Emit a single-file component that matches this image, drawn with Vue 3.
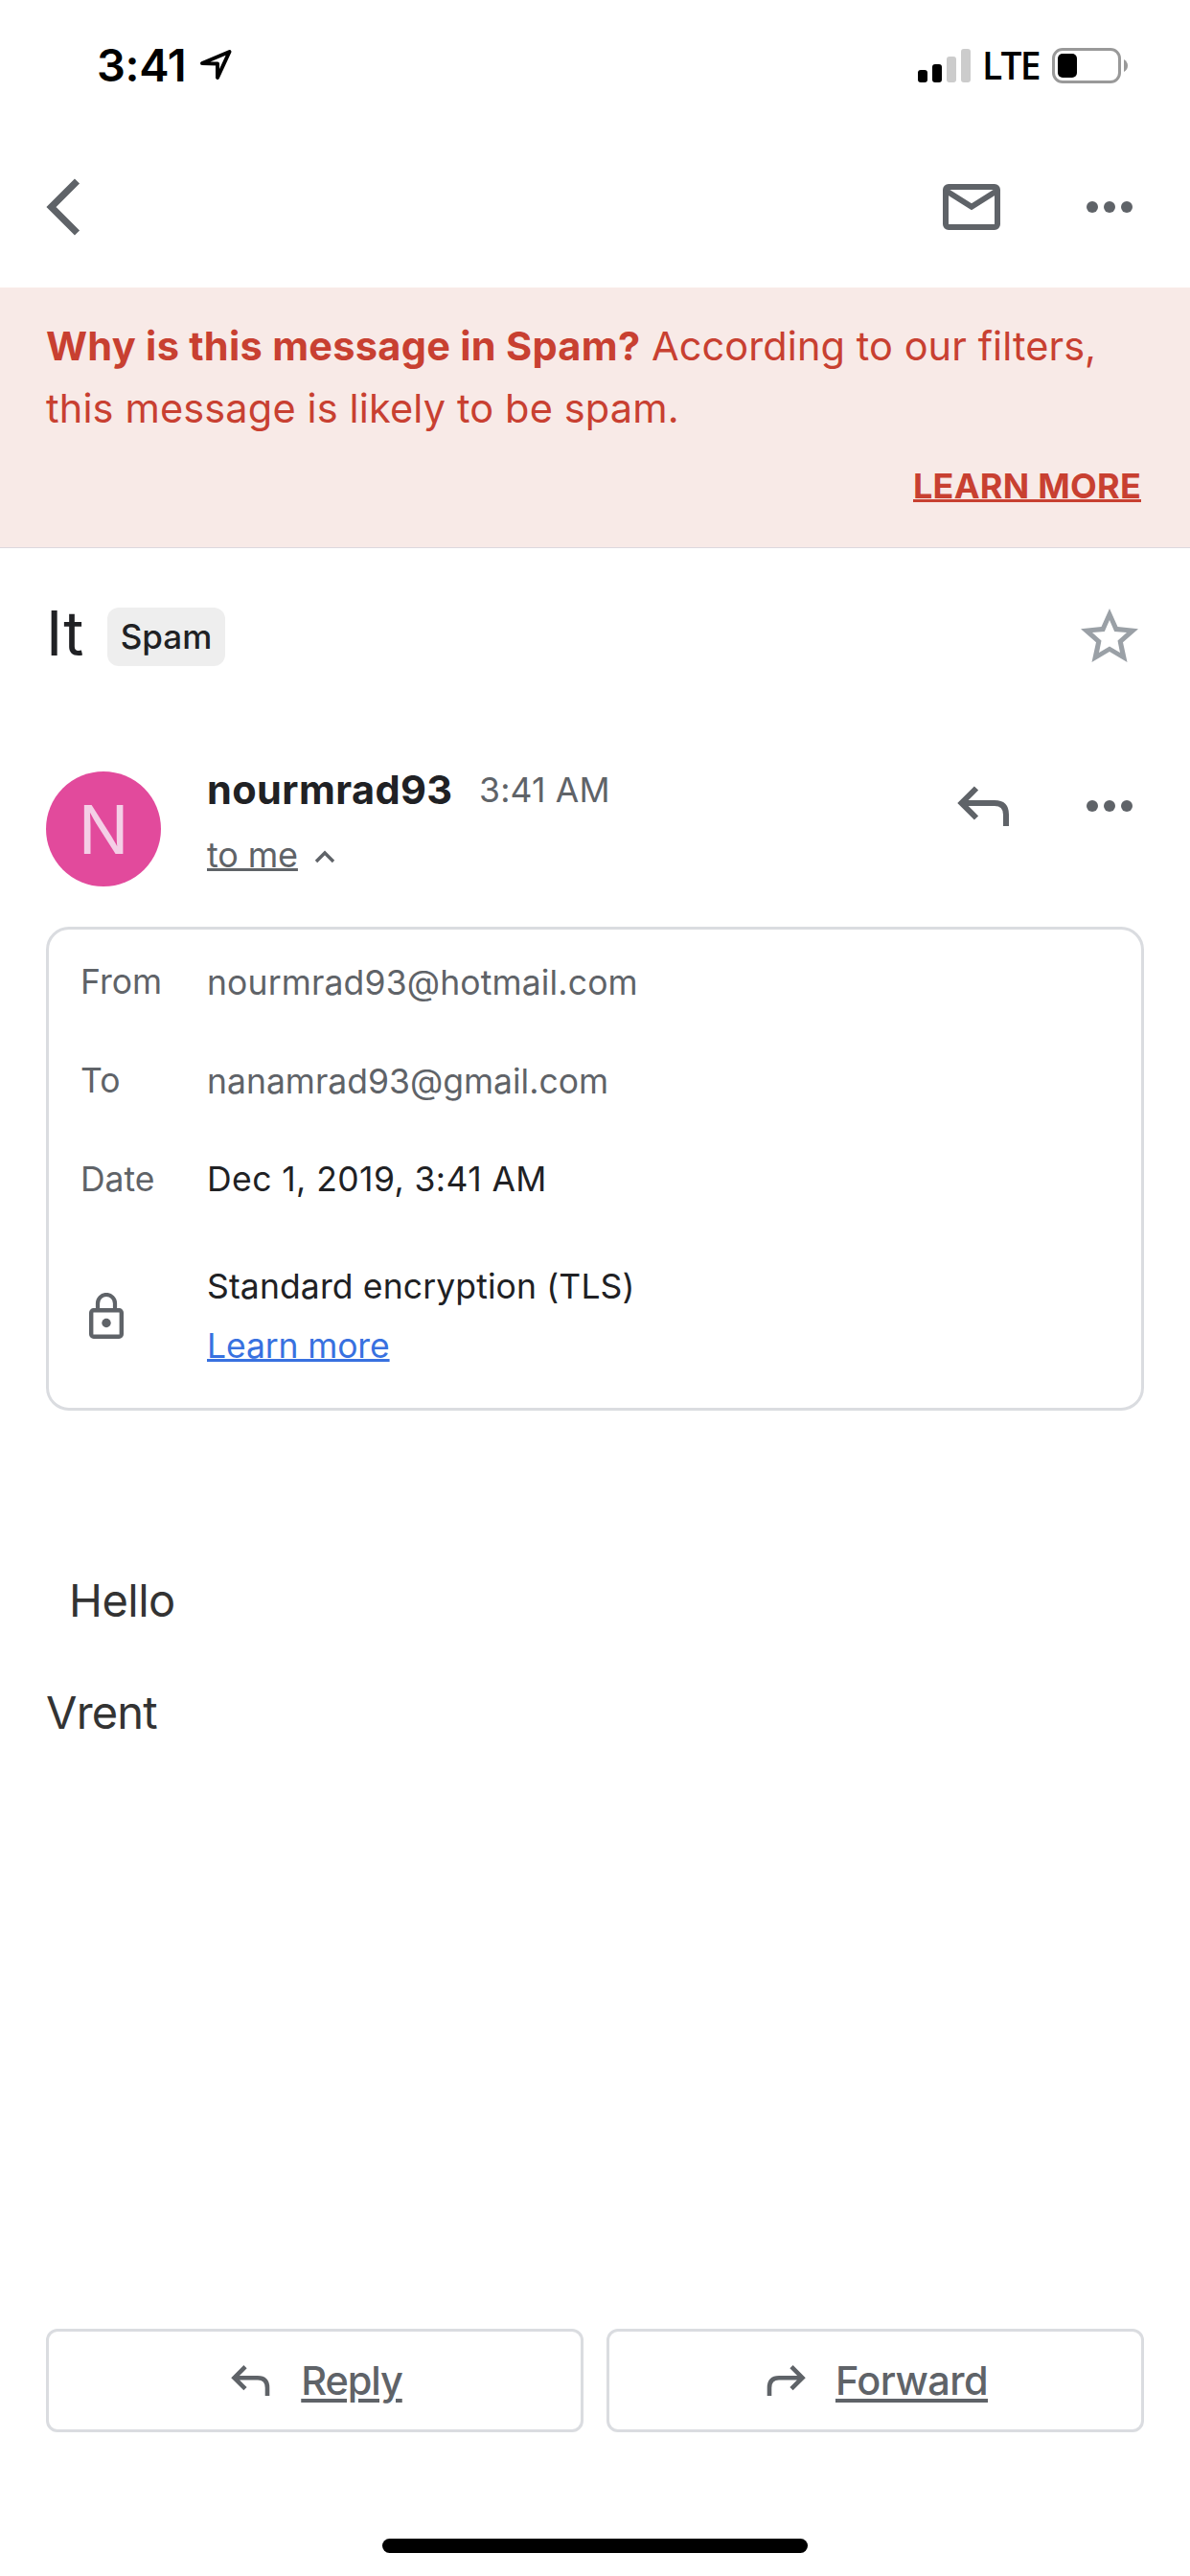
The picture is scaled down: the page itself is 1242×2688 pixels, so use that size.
<script setup>
const details = [
  { label: 'From', value: 'nourmrad93@hotmail.com', cls: 'from' },
  { label: 'To', value: 'nanamrad93@gmail.com', cls: 'to' },
  { label: 'Date', value: 'Dec 1, 2019, 3:41 AM', cls: 'date' },
]
</script>

<template>
  <div class="screen">
    <div class="status">
      <span class="clock">3:41</span>
      <svg class="loc" width="36" height="36" viewBox="0 0 36 36">
        <path d="M4 16 L32.5 4 L20 31 L20 16.500 Z" fill="none" stroke="#000" stroke-width="4" stroke-linejoin="round" />
      </svg>
      <span class="grow"></span>
      <svg class="signal" width="55" height="35" viewBox="0 0 55 35">
        <rect x="0" y="22" width="10" height="13" rx="3" />
        <rect x="15" y="16" width="10" height="19" rx="3" />
        <rect x="30" y="8" width="10" height="27" rx="3" fill="#ccc" />
        <rect x="45" y="0" width="10" height="35" rx="3" fill="#ccc" />
      </svg>
      <span class="lte">LTE</span>
      <svg class="battery" width="80" height="37" viewBox="0 0 80 37">
        <rect x="1.500" y="1.500" width="69" height="34" rx="9.500" fill="none" stroke="#999" stroke-width="3" />
        <rect x="6" y="6" width="20" height="25" rx="5" />
        <path d="M75 12 Q79 14.500 79 18.500 Q79 22.500 75 25 Z" fill="#999" />
      </svg>
    </div>

    <header class="toolbar">
      <svg class="back" width="36" height="60" viewBox="0 0 36 60">
        <path d="M32.500 3 L5.500 30 L32.500 57" fill="none" stroke="#5f6368" stroke-width="7.200" />
      </svg>
      <span class="grow"></span>
      <svg class="mail" width="60" height="48" viewBox="0 0 60 48">
        <rect x="3" y="3" width="54" height="42" rx="3" fill="none" stroke="#5f6368" stroke-width="6" />
        <path d="M5 8 L30 23.700 L55 8" fill="none" stroke="#5f6368" stroke-width="6" />
      </svg>
      <svg width="48" height="12" viewBox="0 0 48 12" fill="#5f6368">
        <circle cx="6" cy="6" r="6" /><circle cx="24" cy="6" r="6" /><circle cx="42" cy="6" r="6" />
      </svg>
    </header>

    <section class="banner">
      <p><strong>Why is this message in Spam?</strong> <span class="b1">According to our filters,</span><br /><span class="b2">this message is likely to be spam.</span></p>
      <a class="learn">LEARN MORE</a>
    </section>

    <section class="subject">
      <span class="title">It</span>
      <span class="chip"><span>Spam</span></span>
      <span class="grow"></span>
      <svg width="60" height="56" viewBox="0 0 60 56">
        <path fill="#9aa0a6" fill-rule="evenodd" d="M30 0 L38.500 19 L60 21.200 L44 35.300 L48.500 56 L30 45 L11.500 56 L16 35.300 L0 21.200 L21.500 19 Z M30 12 L24.800 24 L12 25 L21.500 33.500 L19 46 L30 39.500 L41 46 L38.500 33.500 L48 25 L35.200 24 Z" />
      </svg>
    </section>

    <section class="sender">
      <div class="avatar">N</div>
      <div class="who">
        <div class="line"><span class="name">nourmrad93</span><span class="time">3:41 AM</span></div>
        <div class="line tome">
          <a>to me</a>
          <svg width="22" height="14" viewBox="0 0 22 14">
            <path d="M2 12 L11 3 L20 12" fill="none" stroke="#5f6368" stroke-width="3.400" />
          </svg>
        </div>
      </div>
      <span class="grow"></span>
      <svg class="reply" width="54" height="42" viewBox="0 0 54 42">
        <path d="M20 2.500 L4.500 18 L20 33.500 M4 18 H39 Q51 18 51 30 V42" fill="none" stroke="#5f6368" stroke-width="6" />
      </svg>
      <svg class="more" width="48" height="12" viewBox="0 0 48 12" fill="#5f6368">
        <circle cx="6" cy="6" r="6" /><circle cx="24" cy="6" r="6" /><circle cx="42" cy="6" r="6" />
      </svg>
    </section>

    <section class="card">
      <div v-for="d in details" :key="d.label" class="row" :class="d.cls">
        <span class="label">{{ d.label }}</span>
        <span class="value">{{ d.value }}</span>
      </div>
      <div class="tls">
        <svg width="36" height="48" viewBox="0 0 36 48">
          <rect x="2.200" y="18.200" width="31.600" height="27.600" rx="2.500" fill="none" stroke="#5f6368" stroke-width="4.400" />
          <path d="M9 18 V11 A9 9 0 0 1 27 11 V18" fill="none" stroke="#5f6368" stroke-width="4.200" />
          <circle cx="18" cy="31.500" r="4.700" fill="#5f6368" />
        </svg>
        <div>
          <div class="enc">Standard encryption (TLS)</div>
          <a class="more-link">Learn more</a>
        </div>
      </div>
    </section>

    <section class="body">
      <p class="hello">Hello</p>
      <p class="vrent">Vrent</p>
    </section>

    <footer class="actions">
      <div class="btn b-reply">
        <svg width="42" height="32" viewBox="0 0 42 32">
          <path d="M15 1.700 L3.500 13.200 L15 24.700 M3 13.200 H28 Q38 13.200 38 23.500 V32" fill="none" stroke="#5f6368" stroke-width="4.600" />
        </svg>
        <span class="t1">Reply</span>
      </div>
      <div class="btn b-forward">
        <svg width="42" height="32" viewBox="0 0 42 32">
          <path d="M27 1.700 L38.500 13.200 L27 24.700 M39 13.200 H14 Q4 13.200 4 23.500 V32" fill="none" stroke="#5f6368" stroke-width="4.600" />
        </svg>
        <span class="t2">Forward</span>
      </div>
    </footer>
    <div class="home"></div>
  </div>
</template>

<style>
body { margin: 0; background: #fff; }
</style>

<style scoped>
.screen {
  width: 1242px;
  height: 2688px;
  box-sizing: border-box;
  overflow: hidden;
  display: flex;
  flex-direction: column;
  background: #fff;
  color: #202124;
  font-family: Inter, "Liberation Sans", sans-serif;
  white-space: nowrap;
}
svg { display: block; flex: none; }
p { margin: 0; }
.grow { flex: 1; }

.status {
  height: 132px;
  box-sizing: border-box;
  padding: 4px 64px 0 101px;
  display: flex;
  align-items: center;
  color: #000;
}
.clock { width: 106px; font-size: 47px; font-weight: 600; line-height: 60px; letter-spacing: -0.300px; }
.lte {
  width: 71px;
  margin-left: 12px;
  font-family: "Open Sans", "Noto Sans", sans-serif;
  font-size: 39px;
  font-weight: 600;
  line-height: 50px;
  letter-spacing: -1.800px;
}
.battery { margin-left: 2px; }

.toolbar {
  height: 168px;
  padding: 0 60px 0 48px;
  display: flex;
  align-items: center;
}
.mail { margin-right: 90px; }

.banner {
  height: 272px;
  box-sizing: border-box;
  padding: 29px 51px 0 48px;
  background: #f8eae7;
  border-bottom: 1px solid #dcd8de;
  color: #c84031;
  font-size: 41.500px;
  line-height: 65px;
}
.banner strong { font-weight: 700; letter-spacing: 0.280px; }
.b1 { letter-spacing: 0.070px; }
.b2 { letter-spacing: 0.140px; }
.learn {
  display: block;
  margin-top: 22px;
  text-align: right;
  font-size: 36px;
  line-height: 52px;
  font-weight: 700;
  letter-spacing: 0.250px;
  text-decoration: underline 3px;
  text-underline-offset: 1px;
  text-decoration-skip-ink: none;
}

.subject {
  height: 233px;
  box-sizing: border-box;
  padding: 62px 54px 0 48px;
  display: flex;
  align-items: flex-start;
}
.title { width: 64px; font-size: 64.500px; line-height: 54px; }
.chip {
  width: 123px;
  height: 61px;
  border-radius: 12px;
  background: #eee;
  font-size: 35px;
  line-height: 61px;
  font-weight: 500;
  text-align: center;
}
.subject svg { margin-top: 1px; }

.sender { height: 162px; padding: 0 60px 0 48px; display: flex; }
.avatar {
  width: 120px;
  height: 120px;
  border-radius: 50%;
  background: #e24a9c;
  color: #f4cfe6;
  font-size: 70px;
  line-height: 121px;
  text-align: center;
}
.who { margin-left: 48px; }
.line { display: flex; align-items: center; height: 40px; line-height: 40px; }
.name { width: 284px; font-size: 41.500px; font-weight: 700; line-height: 38px; padding-bottom: 2px; letter-spacing: 0.400px; }
.time { font-size: 35.500px; color: #5f6368; letter-spacing: 0.200px; }
.tome { margin-top: 27px; color: #5f6368; font-size: 36px; gap: 17px; letter-spacing: -0.150px; }
.tome a { text-decoration: underline 3px; text-underline-offset: 1px; text-decoration-skip-ink: none; }
.tome svg { margin-top: 4px; }
.reply { margin: 15px 81px 0 0; }
.more { margin-top: 30px; }

.card {
  margin: 0 48px;
  height: 505px;
  box-sizing: border-box;
  border: 3px solid #dadce0;
  border-radius: 24px;
  padding: 4px 0 0 33px;
  font-size: 35.500px;
}
.row { display: flex; height: 103px; line-height: 103px; color: #5f6368; }
.label { width: 132px; line-height: 102px; }
.row.from .value { letter-spacing: 0.150px; }
.row.date .value { color: #202124; letter-spacing: 0.420px; line-height: 102px; }
.tls { display: flex; margin-top: 35px; }
.tls svg { margin: 31px 87px 0 9px; }
.enc { line-height: 62px; margin-top: -6px; letter-spacing: 0.130px; }
.more-link {
  display: block;
  line-height: 62px;
  letter-spacing: -0.120px;
  color: #3871e0;
  text-decoration: underline 3px;
  text-underline-offset: 1px;
  text-decoration-skip-ink: none;
}

.body { flex: 1; padding: 168px 48px 0; color: #333; font-size: 47px; line-height: 60px; }
.hello { padding-left: 24px; letter-spacing: -0.500px; }
.vrent { margin-top: 57px; letter-spacing: -0.800px; }

.actions { display: flex; gap: 24px; margin: 0 48px; }
.btn {
  flex: 0 0 561px;
  height: 108px;
  box-sizing: border-box;
  border: 3px solid #dadce0;
  border-radius: 12px;
  display: flex;
  align-items: center;
  justify-content: center;
  gap: 31px;
  color: #5f6368;
  font-size: 41.500px;
  font-weight: 500;
  text-decoration: underline 4px;
  text-underline-offset: 4px;
}
.b-reply { padding-left: 4px; }
.b-forward { padding-left: 3px; }
.t1 { letter-spacing: -1.100px; }
.t2 { letter-spacing: -0.600px; }
.home { width: 444px; height: 15px; border-radius: 8px; background: #000; margin: 111px auto 24px; }
</style>
